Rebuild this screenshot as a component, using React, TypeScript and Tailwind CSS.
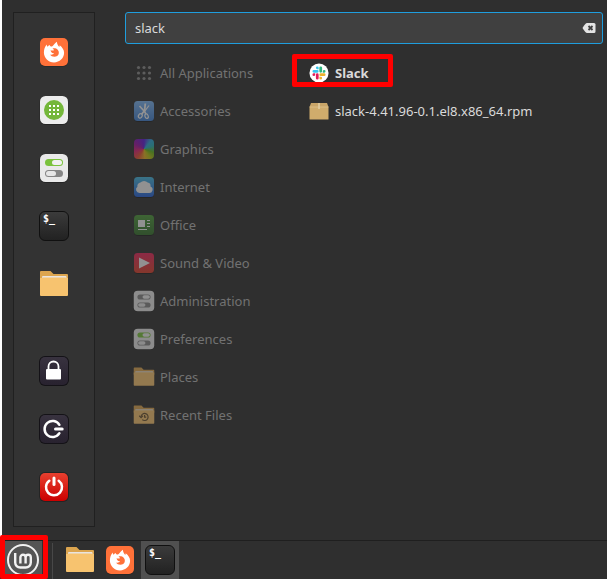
import { useState } from "react";
import type { ReactNode } from "react";

const iconLg = "block h-[30px] w-[30px]";
const iconSm = "block h-[22px] w-[22px]";

function FirefoxIcon() {
  return (
    <svg viewBox="0 0 30 30" className={iconLg} aria-hidden="true">
      <rect x="1" y="1.6" width="28" height="28" rx="5" fill="#1d1d1d" opacity="0.6" />
      <rect x="1" y="1" width="28" height="28" rx="5" fill="#ff7139" />
      <path
        d="M7.6 7.5 C7.8 8.6 8.1 9.2 8.7 9.8 C9 8.9 9.8 8.3 10.6 8 C10.7 8.8 11.2 9.3 12 9.6 C13.3 9.5 14.2 8.6 15 7.4 C15.8 6.4 16.8 5.5 17.9 4.7 C18 6.8 18.8 8.2 20.3 10 C20.6 9.4 20.7 8.9 20.6 8.3 C23.3 10.2 25.1 12.9 25.1 15.8 C25.1 21.3 20.6 25.4 15 25.4 C9.4 25.4 4.900 21 4.900 15.500 C4.900 12.300 6 9.600 7.600 7.500 Z"
        fill="#fff"
      />
      <path
        d="M11.5 13.2 C12.4 13.6 13.7 13.5 15 13.3 C14.9 12.6 14.200 12 13.400 11.600 C15.200 10.900 17.300 11.300 18.700 12.700 C20.400 14.500 20.300 17.500 18.200 19 C15.900 20.400 12.500 19.900 11 17.600 C12.600 18.100 14.200 17.600 15.200 16.600 C13.600 16.500 12 15.300 11.500 13.200 Z"
        fill="#ff7139"
      />
    </svg>
  );
}

function SoftwareIcon() {
  return (
    <svg viewBox="0 0 30 30" className={iconLg} aria-hidden="true">
      <rect x="0.5" y="1" width="29" height="29" rx="6" fill="#1f1f1f" opacity="0.7" />
      <rect x="1" y="1" width="28" height="28" rx="5.5" fill="#ececec" />
      <circle cx="15" cy="15" r="10" fill="#74b73a" />
      {[11, 15, 19].map((y) =>
        [11, 15, 19].map((x) => (
          <rect key={`${x}-${y}`} x={x - 1} y={y - 1} width="2" height="2" fill="#fff" />
        ))
      )}
    </svg>
  );
}

function TogglesIcon({ green, size }: { green: boolean; size: string }) {
  return (
    <svg viewBox="0 0 30 30" className={size} aria-hidden="true">
      <rect x="0.5" y="1" width="29" height="29" rx="6" fill="#1f1f1f" opacity="0.7" />
      <rect x="1" y="1" width="28" height="28" rx="5.5" fill="#e9e9e9" />
      <rect x="6" y="6" width="18" height="7" rx="3.5" fill={green ? "#7ac23c" : "#858585"} />
      <rect x="13" y="7" width="10" height="5" rx="2.5" fill="#f1f1f1" />
      <rect x="6" y="17" width="18" height="7" rx="3.5" fill="#858585" />
      <rect x="7" y="18" width="10" height="5" rx="2.5" fill="#e6e6e6" />
    </svg>
  );
}

function TerminalIcon() {
  return (
    <span
      aria-hidden="true"
      className="flex h-[30px] w-[30px] rounded-[6px] border border-[#101010] bg-linear-to-b from-[#3b3b3b] to-[#222222] pt-[2px] pl-[3px] font-['DejaVu_Sans_Mono',monospace] text-[10px] leading-[10px] font-bold text-white"
    >
      $_
    </span>
  );
}

function FolderIcon({ size, recent }: { size: string; recent?: boolean }) {
  return (
    <svg viewBox="0 0 30 30" className={size} aria-hidden="true">
      <path d="M1 3 Q1 2 2 2 H11.5 L14.500 5 H28 Q29 5 29 6 V12 H1 Z" fill="#dca54f" />
      <rect x="3" y="7" width="24.5" height="5" rx="1" fill="#e9e4e0" />
      <path d="M1 9 H2 Q3 9 3.6 8.5 H26.4 Q27 9 28 9 H29 V26 Q29 27 28 27 H2 Q1 27 1 26 Z" fill="#f7c36f" />
      {recent ? (
        <g fill="none" stroke="#68502e" strokeWidth="1.6">
          <path d="M11 17.5 a4.8 4.8 0 1 1 1.6 3.8" />
          <path d="M8.5 16 L11 18.5 L13.5 16" />
          <path d="M15.8 15 V18 H18" />
        </g>
      ) : null}
    </svg>
  );
}

function SessionIcon({ kind }: { kind: "lock" | "logout" | "power" }) {
  const power = kind === "power";
  return (
    <svg viewBox="0 0 30 30" className={iconLg} aria-hidden="true">
      <defs>
        <linearGradient id={`tile-${kind}`} x1="0" y1="0" x2="0" y2="1">
          <stop offset="0" stopColor={power ? "#e8402f" : "#38323f"} />
          <stop offset="1" stopColor={power ? "#cb0000" : "#28222f"} />
        </linearGradient>
      </defs>
      <rect width="30" height="30" rx="6" fill={power ? "#242424" : "#141217"} />
      <rect x="1" y="1" width="28" height="28" rx="5" fill={`url(#tile-${kind})`} />
      {kind === "lock" ? (
        <>
          <path d="M9.5 14 V10.5 a5 5 0 0 1 10 0 V14" fill="none" stroke="#fff" strokeWidth="1.8" />
          <rect x="7" y="13" width="15" height="10.5" rx="1" fill="#fff" />
        </>
      ) : null}
      {kind === "logout" ? (
        <g fill="none" stroke="#fff" strokeWidth="2.5" strokeLinecap="round">
          <path d="M20.4 10.8 a8 8 0 1 0 0 8.4" />
          <path d="M16.5 15 H23.2" strokeWidth="3" />
        </g>
      ) : null}
      {power ? (
        <g fill="none" stroke="#fff" strokeWidth="2.5" strokeLinecap="round">
          <path d="M10.3 8.8 a8 8 0 1 0 9.4 0" />
          <path d="M15 6 V12.5" strokeWidth="3" />
        </g>
      ) : null}
    </svg>
  );
}

function MintIcon() {
  return (
    <svg viewBox="0 0 32 32" className="block h-8 w-8" fill="none" stroke="#f2f2f2" aria-hidden="true">
      <circle cx="16" cy="16" r="15" strokeWidth="2" />
      <path
        d="M8.2 9 V18.5 a5 5 0 0 0 5 5 H18.8 a5 5 0 0 0 5-5 V13.4 a2.6 2.6 0 0 0-5.2 0 V19.5 M18.6 13.4 a2.6 2.6 0 0 0-5.2 0 V19.5"
        strokeWidth="2.4"
      />
    </svg>
  );
}

// 20px rounded tile used by most of the category icons
function Tile({ id, from, to, children }: { id: string; from: string; to: string; children?: ReactNode }) {
  return (
    <svg viewBox="0 0 22 22" className={iconSm} aria-hidden="true">
      <defs>
        <linearGradient id={id} x1="0" y1="0" x2="0" y2="1">
          <stop offset="0" stopColor={from} />
          <stop offset="1" stopColor={to} />
        </linearGradient>
      </defs>
      <rect x="1" y="1.5" width="20" height="20" rx="3.5" fill="#111" />
      <rect x="1" y="1" width="20" height="20" rx="3.5" fill={`url(#${id})`} />
      {children}
    </svg>
  );
}

function AllAppsIcon() {
  return (
    <svg viewBox="0 0 22 22" className={iconSm} aria-hidden="true">
      {[5.5, 11, 16.5].map((y) =>
        [5.5, 11, 16.5].map((x) => <circle key={`${x}-${y}`} cx={x} cy={y} r="1.6" fill="#8c8c8c" />)
      )}
    </svg>
  );
}

function AccessoriesIcon() {
  return (
    <Tile id="accessories" from="#7db4f0" to="#3f7fd0">
      <g fill="none" stroke="#f4f4f4" strokeWidth="1.2">
        <path d="M12.3 3.5 L11.6 10.5 L8.6 14.2" strokeWidth="1.8" />
        <path d="M6.5 6 L11.5 11.5 L13 14" strokeWidth="1.6" />
        <path d="M16 5.5 L11.5 11.5" />
        <ellipse cx="7.3" cy="15.9" rx="1.8" ry="2.2" transform="rotate(35 7.3 15.9)" />
        <ellipse cx="13.6" cy="16.2" rx="1.6" ry="2.3" transform="rotate(-20 13.6 16.2)" />
      </g>
    </Tile>
  );
}

function GraphicsIcon() {
  return (
    <span className="flex h-[22px] w-[22px] items-center justify-center" aria-hidden="true">
      <span className="block h-5 w-5 rounded-[4px] bg-[conic-gradient(#5b16d8,#2aa6d8_40deg,#25b0b8_70deg,#62b414_110deg,#b8c010_145deg,#e8b020_175deg,#e85030_215deg,#e02070_255deg,#9a10a0_300deg,#5b16d8)]" />
    </span>
  );
}

function InternetIcon() {
  return (
    <Tile id="internet" from="#45b8de" to="#2660d8">
      <path
        d="M6.5 17 a3.5 3.5 0 0 1-2.1-6.3 a3.5 3.5 0 0 1 3-4.2 a5 5 0 0 1 7.3 0 a3.5 3.5 0 0 1 2.8 4 a3.4 3.4 0 0 1-1.8 6.5 Z"
        fill="#f2f2f2"
      />
    </Tile>
  );
}

function OfficeIcon() {
  return (
    <Tile id="office" from="#4d9a3a" to="#34702c">
      <g fill="#f2f2f2">
        <rect x="5" y="6" width="7" height="7" />
        <rect x="14" y="6" width="3" height="1" />
        <rect x="14" y="9" width="3" height="1" />
        <rect x="14" y="12" width="3" height="1" />
        <rect x="5" y="15" width="9" height="1" />
      </g>
    </Tile>
  );
}

function SoundIcon() {
  return (
    <Tile id="sound" from="#e8265c" to="#d8402a">
      <path d="M6 5.5 L17 11 L6 16.5 Z" fill="#f2f2f2" />
    </Tile>
  );
}

function SlackIcon() {
  const arm =
    "M5.042 15.165a2.528 2.528 0 0 1-2.52 2.523A2.528 2.528 0 0 1 0 15.165a2.527 2.527 0 0 1 2.522-2.52h2.52v2.52zM6.313 15.165a2.527 2.527 0 0 1 2.521-2.52 2.527 2.527 0 0 1 2.521 2.52v6.313A2.528 2.528 0 0 1 8.834 24a2.528 2.528 0 0 1-2.521-2.522v-6.313z";
  return (
    <svg viewBox="-10 -10 44 44" className="block h-5 w-5" aria-hidden="true">
      <circle cx="12" cy="12" r="21" fill="#fff" />
      <g transform="translate(-2.4 -2.4) scale(1.2)">
        <path d={arm} fill="#e01e5a" />
        <path d={arm} fill="#36c5f0" transform="rotate(90 12 12)" />
        <path d={arm} fill="#2eb67d" transform="rotate(180 12 12)" />
        <path d={arm} fill="#ecb22e" transform="rotate(270 12 12)" />
      </g>
    </svg>
  );
}

function PackageIcon() {
  return (
    <svg viewBox="0 0 20 20" className="block h-5 w-5" aria-hidden="true">
      <path d="M2 2 H18 L19.5 6 H0.5 Z" fill="#c9a568" />
      <rect x="0.5" y="6" width="19" height="12.5" rx="0.5" fill="#d0ac6c" />
      <path d="M0.5 6 H19.5" stroke="#dfc48f" strokeWidth="0.8" />
      <path d="M10 2 V8" stroke="#e2cfa5" strokeWidth="1.5" />
    </svg>
  );
}

const favorites = [
  { label: "Firefox", icon: <FirefoxIcon /> },
  { label: "Software Manager", icon: <SoftwareIcon /> },
  { label: "System Settings", icon: <TogglesIcon green size={iconLg} /> },
  { label: "Terminal", icon: <TerminalIcon /> },
  { label: "Files", icon: <FolderIcon size={iconLg} /> },
];

const session = [
  { label: "Lock Screen", icon: <SessionIcon kind="lock" /> },
  { label: "Log Out", icon: <SessionIcon kind="logout" /> },
  { label: "Shut Down", icon: <SessionIcon kind="power" /> },
];

const categories = [
  { label: "All Applications", icon: <AllAppsIcon /> },
  { label: "Accessories", icon: <AccessoriesIcon /> },
  { label: "Graphics", icon: <GraphicsIcon /> },
  { label: "Internet", icon: <InternetIcon /> },
  { label: "Office", icon: <OfficeIcon /> },
  { label: "Sound & Video", icon: <SoundIcon /> },
  { label: "Administration", icon: <TogglesIcon green={false} size={iconSm} /> },
  { label: "Preferences", icon: <TogglesIcon green size={iconSm} /> },
  { label: "Places", icon: <FolderIcon size={iconSm} /> },
  { label: "Recent Files", icon: <FolderIcon size={iconSm} recent /> },
];

function Launchers({ items }: { items: typeof favorites }) {
  return (
    <div className="flex flex-col items-center gap-7">
      {items.map((item) => (
        <button key={item.label} type="button" aria-label={item.label}>
          {item.icon}
        </button>
      ))}
    </div>
  );
}

export default function App() {
  const [query, setQuery] = useState("slack");

  return (
    <div className="flex min-h-screen flex-col bg-[#2f2f2f] font-['Noto_Sans',sans-serif] text-[13px] leading-5 text-[#dadada]">
      <main className="flex flex-1 border-l-2 border-white pt-3 pr-1 pb-[13px] pl-[11px]">
        <nav
          aria-label="Favorites"
          className="flex w-[82px] shrink-0 flex-col justify-between gap-14 border border-[#202020] bg-[#333333] py-6"
        >
          <Launchers items={favorites} />
          <Launchers items={session} />
        </nav>

        <div className="ml-[30px] min-w-0 flex-1">
          <div className="flex h-8 items-center rounded-[3px] border border-[#1f9ede] bg-[#404040] pr-[6px] pl-[9px]">
            <input
              type="text"
              aria-label="Search"
              value={query}
              onChange={(e) => setQuery(e.target.value)}
              className="min-w-0 flex-1 bg-transparent outline-none"
            />
            <button type="button" aria-label="Clear" onClick={() => setQuery("")}>
              <svg viewBox="0 0 14 12" className="block h-3 w-[14px]" aria-hidden="true">
                <path d="M5 1 H12 Q13.5 1 13.5 2.5 V9.5 Q13.5 11 12 11 H5 Q3.5 11 0.5 6 Q3.5 1 5 1 Z" fill="#e4e4e4" />
                <path d="M6.5 4 L10.5 8 M10.5 4 L6.5 8" stroke="#404040" strokeWidth="1.8" />
              </svg>
            </button>
          </div>

          <div className="flex pt-[10px]">
            <ul className="w-[167px] shrink-0 pl-2">
              {categories.map((category) => (
                <li key={category.label}>
                  <button type="button" className="flex h-[38px] w-full items-center gap-[5px] text-left text-[#727272]">
                    <span className="opacity-50">{category.icon}</span>
                    {category.label}
                  </button>
                </li>
              ))}
            </ul>
            <ul className="min-w-0 flex-1">
              <li>
                <button type="button" className="relative flex h-[38px] items-center gap-[6px] pr-6 pl-[17px] font-bold">
                  <SlackIcon />
                  Slack
                  <span className="absolute top-0 left-0 h-[33px] w-[101px] rounded-[2px] border-5 border-[#ff0000]" />
                </button>
              </li>
              <li>
                <button type="button" className="flex h-[38px] items-center gap-[6px] pl-[17px]">
                  <PackageIcon />
                  slack-4.41.96-0.1.el8.x86_64.rpm
                </button>
              </li>
            </ul>
          </div>
        </div>
      </main>

      <footer className="flex h-[39px] items-stretch border-t border-[#1f1f1f] pl-1">
        <button
          type="button"
          aria-label="Menu"
          className="relative flex w-[38px] items-center justify-center bg-[#555555]"
        >
          <MintIcon />
          <span className="absolute -top-[6px] -left-1 h-11 w-12 rounded-[2px] border-5 border-[#ff0000]" />
        </button>
        <span className="mt-[2px] ml-[10px] w-px bg-[#484848]" />
        <div className="ml-2 flex gap-[2px]">
          <button type="button" aria-label="Files" className="flex w-[38px] items-center justify-center">
            <FolderIcon size={iconLg} />
          </button>
          <button type="button" aria-label="Firefox" className="flex w-[38px] items-center justify-center">
            <FirefoxIcon />
          </button>
          <button type="button" aria-label="Terminal" className="flex w-[38px] items-center justify-center bg-[#505050]">
            <TerminalIcon />
          </button>
        </div>
      </footer>
    </div>
  );
}
